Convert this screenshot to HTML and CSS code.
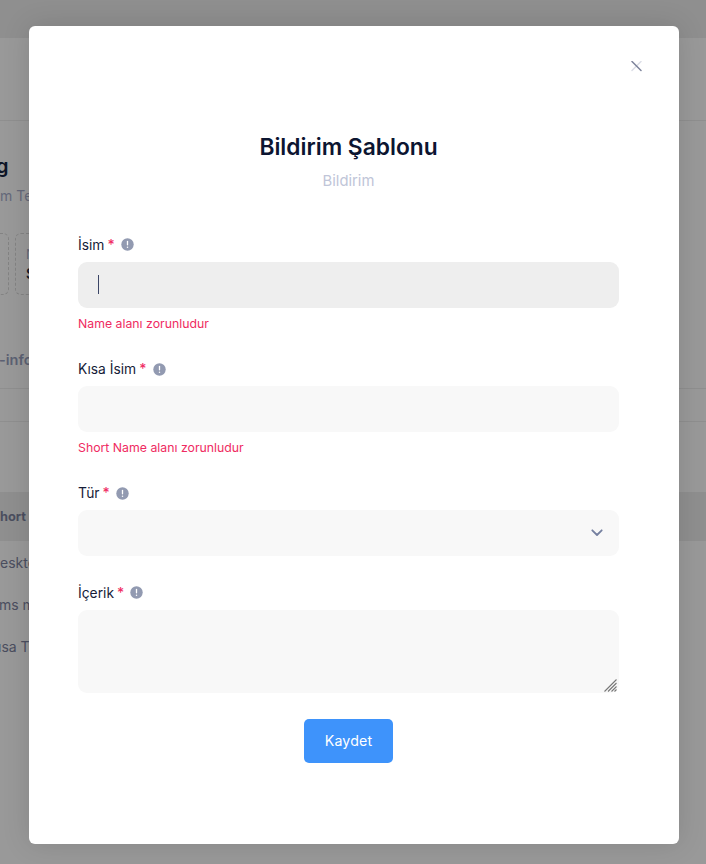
FILE: index.html
```html
<!DOCTYPE html>
<html lang="tr">
<head>
<meta charset="utf-8">
<title>Bildirim Şablonu</title>
<link rel="stylesheet" href="styles.css">
</head>
<body>
<svg class="defs" aria-hidden="true">
  <symbol id="info" viewBox="0 0 13 13"><circle cx="6.5" cy="6.5" r="6.2" fill="#929ab1"/><path d="M6.5 3.5v3.300" stroke="#fff" stroke-width="1.300" stroke-linecap="round"/><circle cx="6.5" cy="9.2" r=".75" fill="#fff"/></symbol>
</svg>
<div class="page">
  <div class="topbar"></div>
  <div class="toolbar"></div>
  <section class="summary">
    <h2 class="summary-title">g</h2>
    <p class="summary-sub">m Te</p>
    <div class="stats">
      <div class="stat stat-first"></div>
      <div class="stat"><span class="stat-name">N</span><b class="stat-value">S</b></div>
    </div>
    <div class="tab">-info</div>
  </section>
  <div class="gap"></div>
  <section class="table">
    <div class="thead">hort</div>
    <div class="row">eskto</div>
    <div class="row row-sms">ms m</div>
    <div class="row row-test">ısa T</div>
  </section>
</div>
<div class="overlay">
  <div class="modal">
    <button class="close" aria-label="Kapat"><svg width="11" height="11" viewBox="0 0 11 11" fill="none" stroke-width="1.5" stroke-linecap="round"><path d="M10 .5 1 9.500" stroke="#dcdee7"/><path d="M1 .5l9 9" stroke="#7e849c"/></svg></button>
    <h1 class="title">Bildirim Şablonu</h1>
    <p class="subtitle">Bildirim</p>
    <form class="form">
      <div class="field name">
        <div class="label"><span class="label-text">İsim</span><span class="star">*</span><svg class="info"><use href="#info"/></svg></div>
        <div class="input focused"><span class="caret"></span></div>
        <div class="error">Name alanı zorunludur</div>
      </div>
      <div class="field short">
        <div class="label"><span class="label-text">Kısa İsim</span><span class="star">*</span><svg class="info info-low"><use href="#info"/></svg></div>
        <div class="input"></div>
        <div class="error">Short Name alanı zorunludur</div>
      </div>
      <div class="field type">
        <div class="label"><span class="label-text">Tür</span><span class="star">*</span><svg class="info info-low"><use href="#info"/></svg></div>
        <div class="input select"><svg width="12" height="8" viewBox="0 0 12 8" fill="none" stroke="#7580a0" stroke-width="1.8" stroke-linecap="round" stroke-linejoin="round"><path d="M1.3 1.3 6 6l4.700-4.700"/></svg></div>
      </div>
      <div class="field content">
        <div class="label"><span class="label-text">İçerik</span><span class="star">*</span><svg class="info"><use href="#info"/></svg></div>
        <div class="input area"><svg width="13" height="13" viewBox="0 0 13 13" stroke="#777" stroke-width="1.1"><path d="M.5 12.500l12-12M4 12.500 12.500 4M7.500 12.500l5-5M10.500 12.500l2-2"/></svg></div>
      </div>
      <button class="save" type="button">Kaydet</button>
    </form>
  </div>
</div>
</body>
</html>
```
FILE: styles.css
```css
* { box-sizing: border-box; }
html, body { margin: 0; height: 864px; overflow: hidden; }
body { position: relative; font-family: Inter, "Liberation Sans", sans-serif; background: #999; }
h1, h2, p { margin: 0; }
button { border: 0; padding: 0; font: inherit; }
.defs { position: absolute; width: 0; height: 0; }

.page { height: 864px; color: #4b4e5f; white-space: nowrap; overflow: hidden; }
.topbar { height: 38px; background: #8f8f8f; }
.toolbar { height: 83px; border-bottom: 1px solid #8f8f8f; }
.summary { height: 268px; padding-top: 31px; border-bottom: 1px solid #8f8f8f; }
.summary-title { margin-left: -4px; font-size: 20px; line-height: 28px; font-weight: 600; color: #0e1527; }
.summary-sub { margin-top: 6px; font-size: 14px; line-height: 20px; color: #646879; }
.stats { display: flex; gap: 6px; margin-top: 27px; }
.stat { width: 120px; height: 62px; padding: 10px; border: 1px dashed #838383; border-radius: 6px; display: flex; flex-direction: column; }
.stat-first { width: 9px; border-left: 0; border-radius: 0 6px 6px 0; padding: 0; }
.stat-name { font-size: 13px; line-height: 20px; color: #646879; }
.stat-value { font-size: 14px; line-height: 20px; font-weight: 600; color: #0e1527; }
.tab { margin-top: 54px; margin-left: -1px; font-size: 14.500px; line-height: 22px; font-weight: 600; color: #5c6173; }
.gap { height: 33px; border-bottom: 1px solid #8f8f8f; }
.table { padding-top: 70px; }
.thead { height: 49px; line-height: 50px; font-size: 12.800px; font-weight: 700; background: #8f8f8f; }
.row { height: 42px; line-height: 44px; font-size: 14px; }
.row-sms { margin-left: -1px; }
.row-test { margin-left: -2px; }

.overlay { position: absolute; inset: 0; padding: 26px 27px 20px 29px; }
.modal { position: relative; width: 650px; height: 818px; padding: 105px 60px 0 49px; border-radius: 6px; background: #fff; box-shadow: 0 0 28px rgba(0,0,0,.13); }
.close { position: absolute; top: 35px; right: 37px; width: 11px; height: 11px; background: none; }
.close svg { display: block; }
.title { text-align: center; font-size: 22.750px; line-height: 32px; font-weight: 600; color: #0c1531; }
.subtitle { margin-top: 7px; text-align: center; font-size: 14.800px; line-height: 22px; color: #c0c5d8; }
.form { display: flex; flex-direction: column; padding-top: 42px; }
.field { height: 124px; }
.label { display: flex; align-items: center; height: 20px; margin-bottom: 8px; font-size: 13.800px; line-height: 20px; color: #161c38; }
.label-text, .star { padding-top: 2px; }
.star { margin-left: 3px; color: #ef2b62; font-weight: 500; }
.info { width: 13px; height: 13px; margin-left: 6px; }
.info-low { margin-top: 2px; }
.short .info { margin-left: 7px; }
.input { height: 46px; border-radius: 9px; background: #f8f8f8; display: flex; align-items: center; }
.focused { background: #eee; padding: 0 0 1px 20px; }
.caret { width: 1px; height: 19px; background: #3b4566; }
.error { margin-top: 7px; font-size: 12.300px; line-height: 18px; color: #ef2b62; }
.type { height: 100px; }
.select { justify-content: flex-end; padding-right: 16px; }
.content { height: 137px; }
.area { height: 83px; align-items: flex-end; justify-content: flex-end; padding: 0 2px 1px 0; }
.save { align-self: center; width: 89px; height: 44px; padding-bottom: 1px; border-radius: 5px; background: #3e93fb; color: #fff; font-size: 14.200px; font-weight: 400; letter-spacing: .15px; }
```
